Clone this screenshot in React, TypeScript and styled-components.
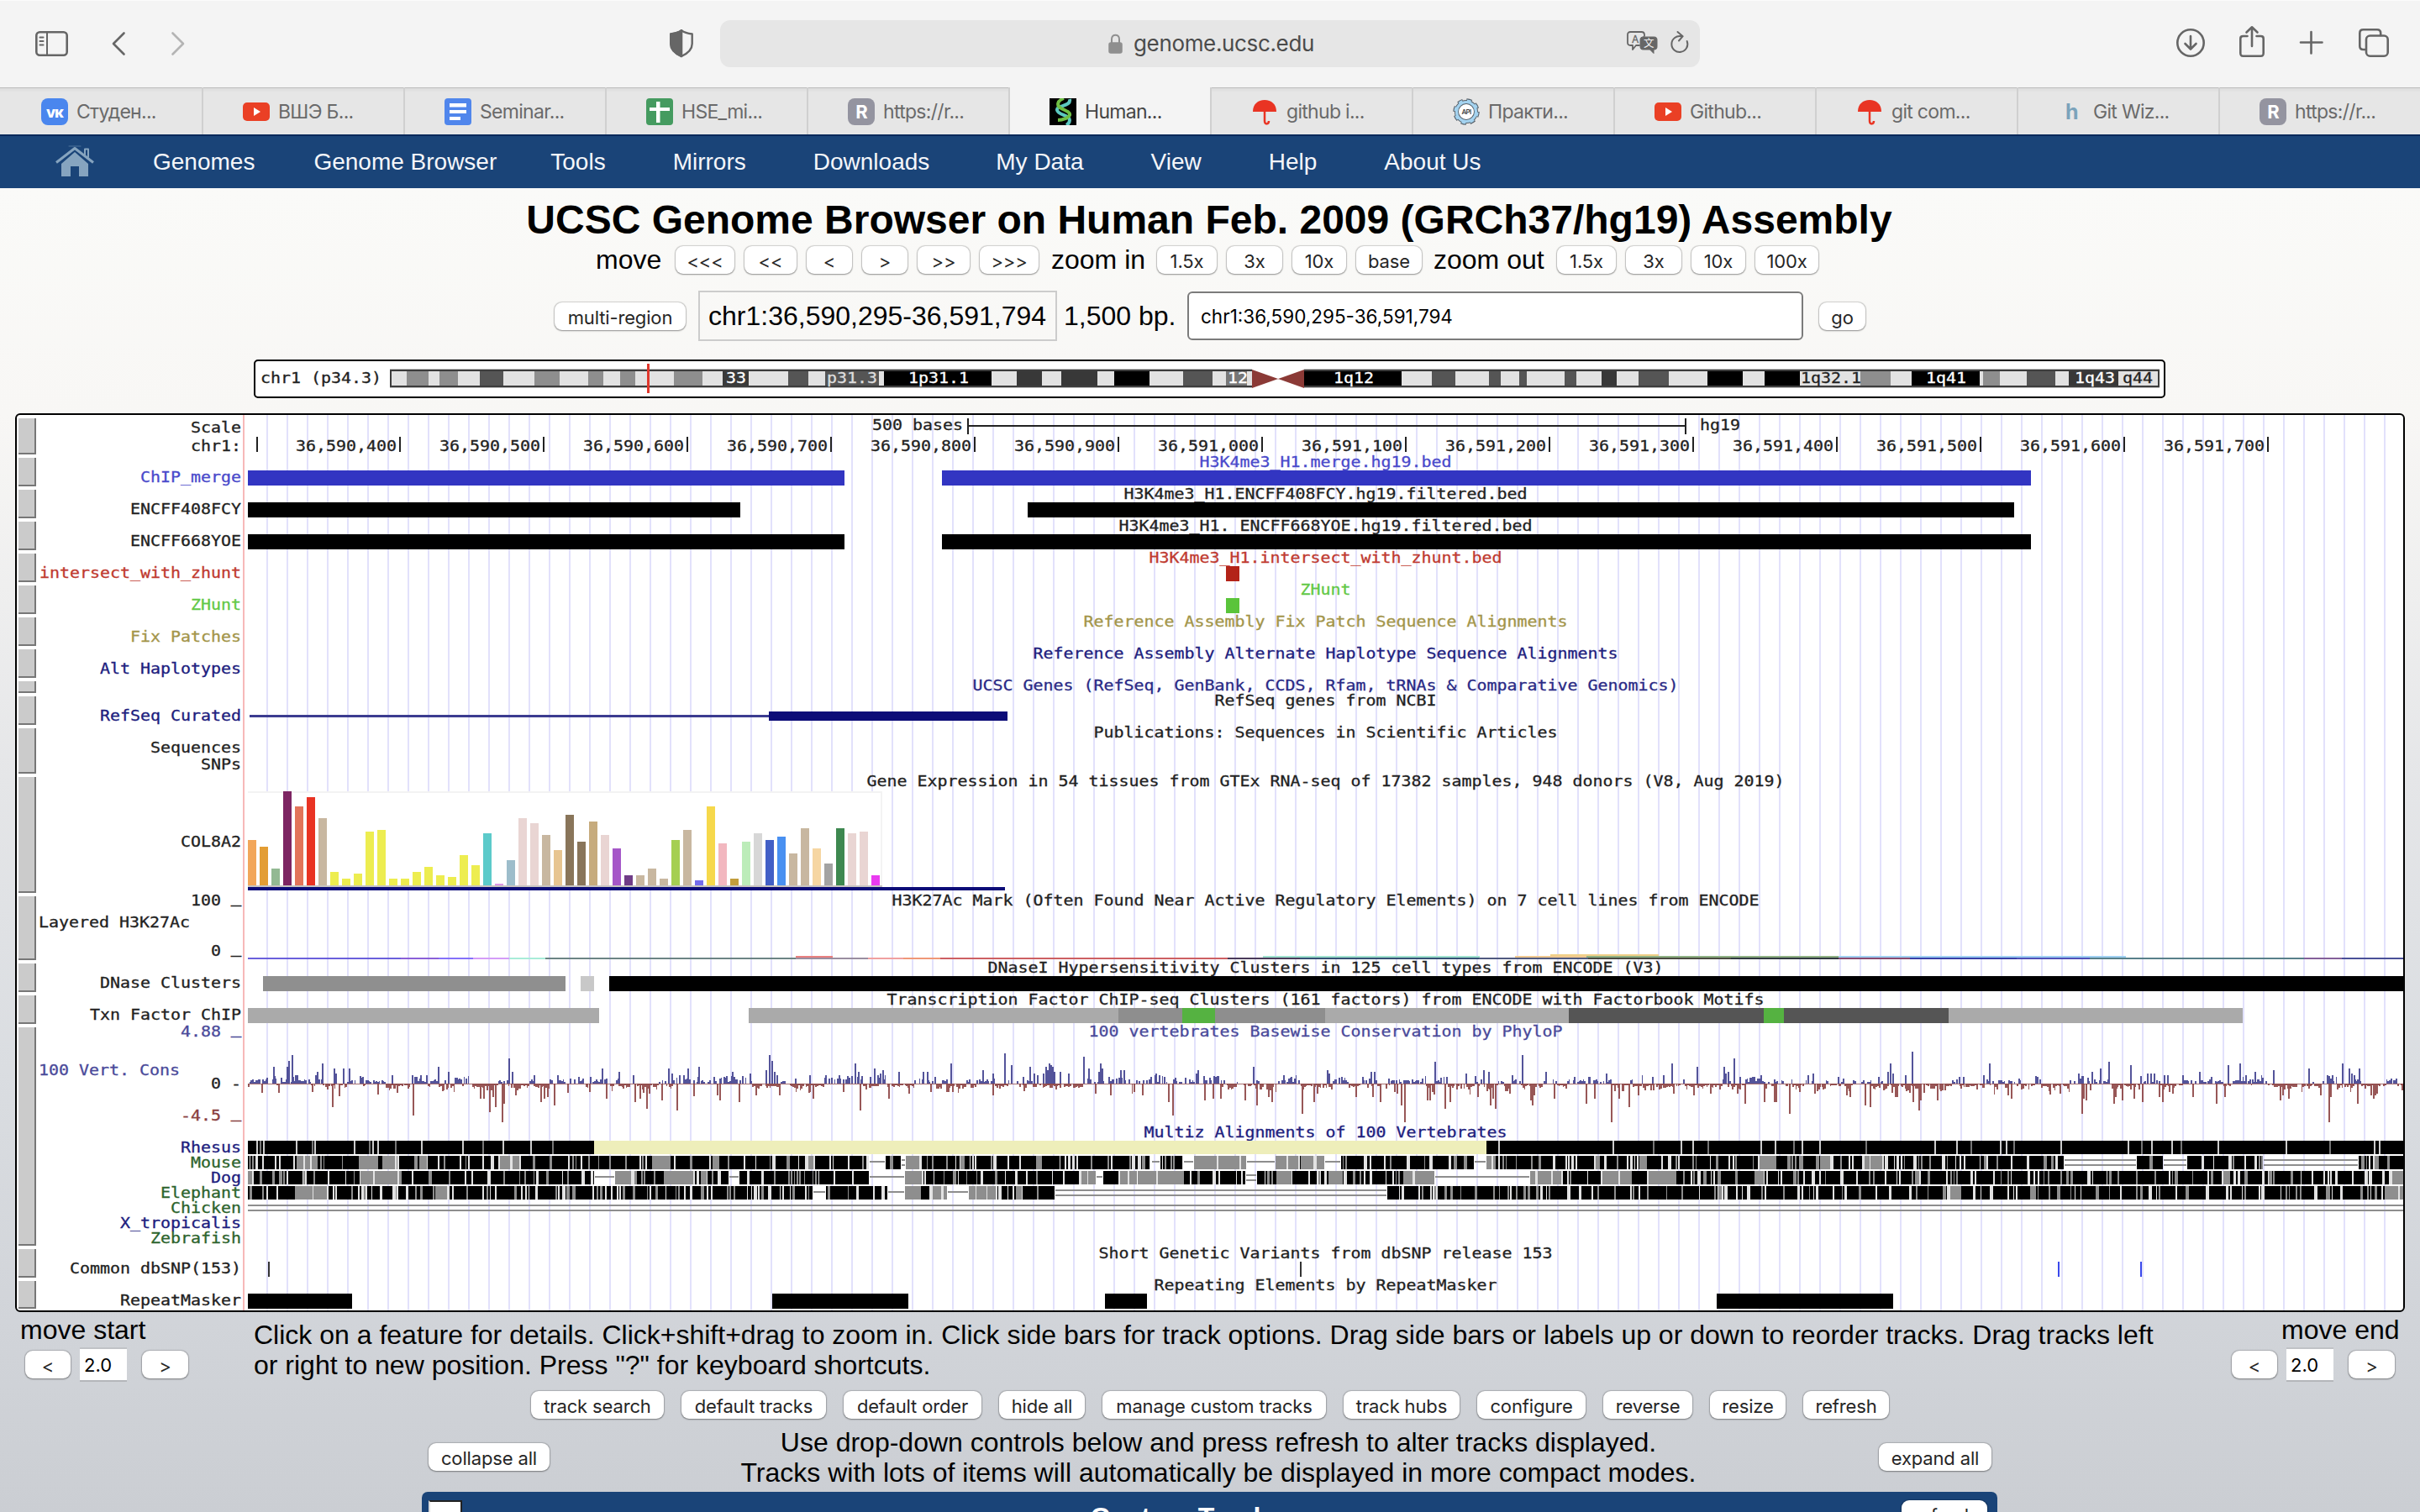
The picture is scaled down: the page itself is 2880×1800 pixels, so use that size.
import React from "react";
import styled, { createGlobalStyle } from "styled-components";

const UI = `Inter, "Noto Sans", sans-serif`;
const ARIAL = `"Liberation Sans", Arial, sans-serif`;
const MONO = `"DejaVu Sans Mono", "Liberation Mono", monospace`;
const NAVY = "#1a4478";

const GlobalStyle = createGlobalStyle`
  html, body { margin: 0; padding: 0; }
  body { width: 2880px; height: 1800px; overflow: hidden; color: #000; font-family: ${ARIAL}; }
  * { box-sizing: border-box; }
`;

const Window = styled.div`
  width: 2880px;
  height: 1800px;
  overflow: hidden;
  display: flex;
  flex-direction: column;
`;

/* ---------- Browser chrome ---------- */

const Toolbar = styled.header`
  height: 104px;
  flex: none;
  display: flex;
  align-items: center;
  padding-left: 42px;
  background: #f4f4f4;
  box-shadow: inset 0 1px #fbfbfb;
`;

const Glyph = styled.svg<{ $w: number; $h: number; $ml?: number; $mt?: number; $color?: string }>`
  width: ${(p) => p.$w}px;
  height: ${(p) => p.$h}px;
  margin-left: ${(p) => p.$ml ?? 0}px;
  margin-top: ${(p) => p.$mt ?? 0}px;
  color: ${(p) => p.$color ?? "#666"};
  fill: none;
  stroke: currentColor;
  stroke-width: 2.6;
  stroke-linecap: round;
  stroke-linejoin: round;
  flex: none;
  overflow: visible;
`;

const AddressField = styled.div`
  width: 1166px;
  height: 56px;
  margin-left: 32px;
  padding-left: 462px;
  border-radius: 12px;
  background: #e6e6e6;
  display: flex;
  align-items: center;
  flex: none;
`;

const Host = styled.span`
  width: 216px;
  margin-left: 13px;
  font: 400 26px/54px ${UI};
  letter-spacing: -0.35px;
  color: #4b4b4b;
  white-space: nowrap;
`;

const TabStrip = styled.div`
  height: 56px;
  flex: none;
  display: grid;
  grid-template-columns: repeat(12, 240px);
  background: #e6e6e6;
`;

const Tab = styled.div<{ $active?: boolean }>`
  display: flex;
  align-items: center;
  gap: 10px;
  padding: 2px 0 0 47px;
  border-left: 2px solid #d0d0d0;
  background: ${(p) =>
    p.$active ? "#f4f4f4" : "linear-gradient(#bdbdbd 0, #bdbdbd 1px, #dcdcdc 1px, #e6e6e6 6px)"};
  color: ${(p) => (p.$active ? "#444" : "#6a6a6a")};
  font: 400 23px/30px ${UI};
  letter-spacing: -0.7px;
  white-space: nowrap;
  &:first-child { border-left-color: transparent; }
`;

const Fav = styled.svg`
  width: 32px;
  height: 32px;
  flex: none;
`;

/* ---------- Site menu ---------- */

const Menu = styled.nav`
  height: 64px;
  flex: none;
  display: flex;
  align-items: center;
  padding-left: 65px;
  background: ${NAVY};
  border-top: 2px solid #08295a;
`;

const MenuItem = styled.a<{ $gap: number }>`
  margin-left: ${(p) => p.$gap}px;
  font: 400 28px/62px ${ARIAL};
  color: #f4f6fa;
  white-space: nowrap;
`;

/* ---------- Page ---------- */

const Page = styled.main`
  flex: 1;
  min-height: 0;
  display: flex;
  flex-direction: column;
  background: linear-gradient(
    #fafaf8 0,
    #f8f7f5 270px,
    #e5e6e8 700px,
    #dadde1 1050px,
    #d1d4d9 1350px,
    #cbced3 1576px
  );
  font-size: 32px;
  line-height: 36px;
`;

const Heading = styled.h1`
  flex: none;
  margin: 10px 0 0;
  padding-right: 2px;
  font: 700 48px/56px ${ARIAL};
  text-align: center;
  white-space: nowrap;
`;

const ControlRow = styled.div<{ $left: number; $h: number; $mt?: number }>`
  display: flex;
  flex: none;
  align-items: center;
  height: ${(p) => p.$h}px;
  margin-top: ${(p) => p.$mt ?? 0}px;
  padding-left: ${(p) => p.$left}px;
`;

const Caption = styled.span<{ $w: number; $pl?: number }>`
  width: ${(p) => p.$w}px;
  padding-left: ${(p) => p.$pl ?? 0}px;
  white-space: nowrap;
`;

const ButtonGroup = styled.div<{ $gap?: number }>`
  display: flex;
  padding-top: 1px;
  gap: ${(p) => p.$gap ?? 12}px;
`;

const PushButton = styled.button<{ $w: number }>`
  width: ${(p) => p.$w}px;
  height: 33px;
  flex: none;
  padding: 3px 0 0;
  border: 0;
  border-radius: 9px;
  background: #fff;
  box-shadow: 0 0 1px 0.5px rgba(0, 0, 0, 0.16), 0 1px 2px rgba(0, 0, 0, 0.3);
  color: #262626;
  font: 400 22px/28px ${UI};
  letter-spacing: -0.15px;
  text-align: center;
  white-space: nowrap;
`;

const PositionBox = styled.div`
  width: 427px;
  height: 60px;
  margin: 0 8px 0 15px;
  padding-left: 10px;
  border: 2px solid #ccc;
  line-height: 56px;
  white-space: nowrap;
`;

const SearchBox = styled.div`
  width: 733px;
  height: 58px;
  margin-right: 19px;
  padding: 2px 0 0 14px;
  border: 2px solid #7b7b7b;
  border-radius: 6px;
  background: #fff;
  font: 400 22.5px/52px ${UI};
  white-space: nowrap;
`;

const IdeogramFrame = styled.div`
  width: 2275px;
  height: 46px;
  flex: none;
  margin: 22px 0 0 302px;
  border: 2px solid #000;
  border-radius: 5px;
  background: #fff;
  svg { display: block; }
`;

/* ---------- Track image ---------- */

const TrackImage = styled.section`
  width: 2844px;
  height: 1070px;
  flex: none;
  margin: 18px 0 0 18px;
  border: 2px solid #000;
  border-radius: 6px;
  background: #fff;
`;

const TrackRow = styled.div<{ $h: number }>`
  display: grid;
  grid-template-columns: 23px 246px 1fr;
  height: ${(p) => p.$h}px;
`;

const Handle = styled.div<{ $top?: boolean }>`
  margin: ${(p) => (p.$top ? 4 : 2)}px 0 2px 2px;
  background: #cbcbcb;
  border-right: 2px solid #777;
  border-bottom: 2px solid #777;
`;

const Labels = styled.div<{ $pad?: number }>`
  padding: ${(p) => p.$pad ?? 18}px 2px 0 0;
`;

const Label = styled.div<{ $color?: string; $left?: boolean; $mt?: number; $lh?: number }>`
  margin-top: ${(p) => p.$mt ?? 0}px;
  margin-left: ${(p) => (p.$left ? 3 : 0)}px;
  font: 400 17px/${(p) => p.$lh ?? 14}px ${MONO};
  -webkit-text-stroke: 0.3px;
  color: ${(p) => p.$color ?? "#222"};
  white-space: pre;
  text-align: ${(p) => (p.$left ? "left" : "right")};
  transform: scaleX(1.1726);
  transform-origin: ${(p) => (p.$left ? "left" : "right")};
`;

const Underscore = styled.span`
  position: relative;
  top: -3px;
  -webkit-text-stroke: 0.8px;
`;

const Plot = styled.div`
  min-width: 0;
  padding-left: 4px;
  border-left: 2px solid #f7b9b9;
  background: repeating-linear-gradient(90deg, transparent 0 22px, #e2e1fb 22px 24px) content-box content-box;
`;

const TrackTitle = styled.div<{ $color?: string; $mt?: number }>`
  width: 2187px;
  height: 17px;
  margin: ${(p) => p.$mt ?? 0}px 0 0 189px;
  font: 400 17px/14px ${MONO};
  -webkit-text-stroke: 0.3px;
  color: ${(p) => p.$color ?? "#222"};
  text-align: center;
  white-space: pre;
  transform: scaleX(1.1726);
`;

const Canvas = styled.svg`
  display: block;
  shape-rendering: crispEdges;
  overflow: visible;
`;

const AxisText = styled.text`
  font: 400 17px ${MONO};
  stroke: currentColor;
  stroke-width: 0.3px;
`;

/* ---------- Footer controls ---------- */

const HelpRow = styled.div`
  display: flex;
  height: 90px;
  flex: none;
`;

const EdgeMover = styled.div<{ $pl: number; $w: number }>`
  width: ${(p) => p.$w}px;
  padding: 3px 0 0 ${(p) => p.$pl}px;
`;

const EdgeControls = styled.div<{ $shift: number }>`
  display: flex;
  align-items: center;
  height: 41px;
  margin: 3px 0 0 ${(p) => p.$shift}px;
`;

const EdgeInput = styled.div`
  width: 56px;
  height: 41px;
  margin: 0 18px 0 11px;
  padding-left: 5px;
  background: #fff;
  border-top: 2px solid #c0c2c6;
  border-bottom: 2px solid #b4b6ba;
  font: 400 22px/38px ${UI};
`;

const HelpText = styled.p`
  width: 2340px;
  margin: 0;
  padding-top: 9px;
  white-space: nowrap;
`;

const CenteredText = styled.p`
  width: 1582px;
  margin: 0;
  padding: 1px 0 0 10px;
  text-align: center;
  white-space: nowrap;
`;

const GroupHeader = styled.div`
  width: 1875px;
  height: 60px;
  flex: none;
  margin: 6px 0 0 502px;
  padding: 10px 12px 0 8px;
  display: flex;
  align-items: flex-start;
  justify-content: space-between;
  border-radius: 7px 7px 0 0;
  background: ${NAVY};
  color: #fff;
  font-weight: 700;
`;

const ToggleBox = styled.span`
  width: 40px;
  height: 40px;
  background: #fff;
  border: 2px solid #222;
  border-left-color: #ddd;
`;

const GroupTitle = styled.span`
  margin: 2px 0 0 12px;
  line-height: 36px;
`;

/* ---------- Data ---------- */

type Segment = [number, number, string];

const PLOT_X = 295;
const PLOT_W = 2565;

function Bars({ items, h = 18 }: { items: Segment[]; h?: number }) {
  return (
    <Canvas width={PLOT_W} height={h}>
      {items.map(([a, b, fill], i) => (
        <rect key={i} x={a - PLOT_X} y={0} width={b - a} height={h} fill={fill} />
      ))}
    </Canvas>
  );
}

const simpleTracks: { label?: string; title: string; color?: string; h?: number; bars?: Segment[] }[] = [
  { label: "ChIP_merge", title: "H3K4me3_H1.merge.hg19.bed", color: "#4a4acb", bars: [[295, 1005, "#3235c2"], [1121, 2417, "#3235c2"]] },
  { label: "ENCFF408FCY", title: "H3K4me3_H1.ENCFF408FCY.hg19.filtered.bed", bars: [[295, 881, "#000"], [1223, 2397, "#000"]] },
  { label: "ENCFF668YOE", title: "H3K4me3_H1. ENCFF668YOE.hg19.filtered.bed", bars: [[295, 1005, "#000"], [1121, 2417, "#000"]] },
  { label: "intersect_with_zhunt", title: "H3K4me3_H1.intersect_with_zhunt.bed", color: "#c03a30", bars: [[1459, 1475, "#b32318"]] },
  { label: "ZHunt", title: "ZHunt", color: "#62c846", bars: [[1459, 1475, "#5ac43b"]] },
  { label: "Fix Patches", title: "Reference Assembly Fix Patch Sequence Alignments", color: "#a3954a" },
  { label: "Alt Haplotypes", title: "Reference Assembly Alternate Haplotype Sequence Alignments", color: "#20207e" },
  { title: "UCSC Genes (RefSeq, GenBank, CCDS, Rfam, tRNAs & Comparative Genomics)", color: "#2a2a86", h: 18 },
];

const dnase: Segment[] = [[313, 673, "#8f8f8f"], [691, 707, "#c8c8c8"], [725, 2860, "#000"]];

const txn: Segment[] = [
  [295, 713, "#aaa"], [891, 1331, "#aaa"], [1331, 1577, "#8e8e8e"], [1407, 1446, "#55b241"],
  [1577, 1867, "#aaa"], [1867, 2319, "#555"], [2099, 2123, "#55b241"], [2319, 2669, "#aaa"],
];

const repeats: Segment[] = [[295, 419, "#000"], [919, 1081, "#000"], [1315, 1365, "#000"], [2043, 2253, "#000"]];

const TAN = "#c8b7a0";
const YEL = "#eded50";
const PNK = "#e9d5d3";
const gtex: [number, string][] = [
  [54, "#f2a65a"], [46, "#e39d34"], [20, "#93b993"], [112, "#7d2562"], [94, "#e2745a"], [105, "#e93323"], [80, TAN],
  [16, YEL], [8, YEL], [14, YEL], [64, YEL], [66, YEL], [8, YEL], [8, YEL], [16, YEL], [22, YEL], [12, YEL], [10, YEL],
  [36, YEL], [24, YEL], [62, "#5ccaca"], [2, "#dd99e5"], [30, "#9dbdcb"], [80, PNK], [74, PNK], [60, TAN], [42, "#e7c591"],
  [84, "#89755a"], [52, "#89755a"], [76, "#c6ab7d"], [60, PNK], [44, "#a557c8"], [12, "#703d87"], [12, TAN], [20, TAN],
  [8, TAN], [54, "#a5cf52"], [66, TAN], [6, "#746cec"], [94, "#f6d84b"], [50, "#f2b7bf"], [8, "#c29d3c"], [52, "#bcecb9"],
  [62, "#d7d7d7"], [54, "#425fc6"], [58, "#4990f1"], [38, TAN], [68, TAN], [44, "#f6d6a2"], [26, "#a3a3a3"],
  [68, "#3e8850"], [62, PNK], [64, PNK], [12, "#e93bf0"],
];

const layered: [number, number, number, string][] = [
  [295, 477, 0, "#6a60dc"], [477, 522, 0, "#8a60d8"], [522, 563, 0, "#8470fa"], [563, 606, 0, "#d49cf8"],
  [606, 649, 0, "#a8ecd8"], [649, 947, 0, "#6c8484"], [947, 1033, 0, "#9a8ea0"], [947, 991, 2, "#e88080"],
  [1033, 1075, 0, "#f0a0a0"], [1075, 1119, 0, "#f09878"], [1119, 1461, 0, "#cd5f63"], [1461, 1547, 0, "#4a3a5a"],
  [1547, 1760, 0, "#355075"], [1503, 1761, 2, "#9fe2cf"], [1760, 1890, 0, "#505a80"], [1803, 1888, 2, "#f0c890"],
  [1845, 1974, 4, "#f0d088"], [1888, 2188, 2, "#8fb184"], [1890, 2060, 0, "#4a4a40"], [2060, 2188, 0, "#303840"],
  [2188, 2530, 2, "#9fd0f2"], [2188, 2273, 0, "#8a4a70"], [2273, 2400, 0, "#3840a8"], [2400, 2487, 0, "#5050b8"],
  [2487, 2742, 0, "#58808a"], [2742, 2787, 0, "#84609a"], [2787, 2860, 0, "#4a5098"],
];

const peaksUp: [number, number][] = [
  [326, 20], [342, 20], [344, 27], [348, 34], [352, 10], [354, 10], [378, 14], [384, 24], [398, 18], [400, 12], [409, 18], [416, 18], [432, 8], [467, 10],
  [508, 10], [522, 20], [534, 14], [555, 6], [606, 30], [610, 14], [636, 10], [664, 10], [717, 18], [737, 14], [754, 10], [796, 18],
  [800, 12], [819, 18], [832, 20], [872, 14], [893, 12], [912, 16], [916, 34], [919, 27], [922, 14], [925, 10], [947, 6], [964, 10],
  [1018, 24], [1022, 14], [1036, 8], [1041, 18], [1045, 10], [1048, 12], [1051, 16], [1070, 14], [1099, 14], [1104, 14], [1132, 24], [1170, 16], [1182, 12],
  [1196, 36], [1204, 22], [1218, 8], [1226, 20], [1231, 12], [1242, 12], [1245, 20], [1247, 16], [1249, 24], [1251, 22], [1253, 20], [1255, 14], [1262, 14], [1272, 12],
  [1290, 32], [1296, 18], [1308, 14], [1310, 24], [1312, 18], [1334, 16], [1338, 16], [1376, 12], [1386, 8], [1424, 12], [1426, 16], [1492, 20], [1528, 10],
  [1537, 8], [1580, 16], [1582, 12], [1622, 8], [1632, 14], [1636, 14], [1653, 6], [1708, 26], [1722, 8], [1745, 12], [1766, 16], [1772, 14],
  [1800, 10], [1812, 34], [1840, 14], [1874, 8], [1892, 8], [1912, 12], [1967, 8], [1980, 10], [1990, 24], [2020, 20],
  [2052, 20], [2054, 12], [2057, 14], [2064, 30], [2071, 8], [2096, 10], [2152, 10], [2158, 12], [2188, 8], [2236, 8], [2247, 14], [2250, 24], [2253, 12],
  [2268, 10], [2276, 38], [2332, 8], [2337, 8], [2361, 10], [2368, 24], [2403, 6], [2474, 12], [2490, 14], [2500, 18], [2510, 26],
  [2536, 22], [2556, 12], [2560, 12], [2564, 12], [2576, 10], [2580, 10], [2598, 10], [2618, 14], [2652, 22], [2666, 24], [2684, 14],
  [2706, 16], [2748, 18], [2776, 10], [2788, 24], [2796, 18], [2799, 12], [2802, 10], [2808, 18], [2846, 6], [2852, 6],
];

const peaksDown: [number, number][] = [
  [312, 11], [332, 11], [372, 10], [396, 28], [404, 15], [450, 13], [473, 11], [492, 38], [572, 18], [576, 18], [583, 34], [587, 16],
  [590, 28], [598, 46], [600, 24], [614, 14], [644, 22], [648, 18], [652, 16], [660, 26], [676, 11], [702, 10], [722, 18], [756, 22], [762, 18], [770, 30],
  [773, 12], [788, 20], [806, 32], [826, 15], [854, 14], [857, 20], [880, 22], [900, 14], [928, 14], [968, 18], [1004, 10], [1024, 32],
  [1058, 18], [1082, 12], [1108, 10], [1127, 10], [1134, 10], [1182, 14], [1304, 12], [1322, 14], [1350, 10], [1360, 14],
  [1391, 22], [1396, 38], [1434, 20], [1444, 18], [1453, 18], [1482, 20], [1496, 26], [1510, 16], [1514, 22], [1550, 36],
  [1564, 22], [1614, 16], [1634, 16], [1643, 22], [1660, 10], [1663, 12], [1668, 26], [1672, 46], [1699, 20], [1702, 20], [1720, 30], [1726, 22], [1759, 16],
  [1774, 26], [1777, 18], [1780, 30], [1797, 12], [1822, 20], [1824, 26], [1826, 14], [1850, 18], [1888, 24], [1898, 18], [1918, 46], [1927, 18], [1939, 28],
  [1950, 14], [1992, 12], [2016, 14], [2036, 12], [2068, 12], [2077, 24], [2100, 22], [2112, 22], [2114, 22], [2130, 36], [2142, 10], [2160, 12],
  [2198, 14], [2202, 16], [2220, 26], [2226, 28], [2256, 16], [2258, 16], [2277, 22], [2284, 32], [2286, 20], [2306, 20], [2312, 8], [2315, 8],
  [2390, 14], [2394, 18], [2452, 12], [2478, 36], [2480, 18], [2483, 20], [2516, 24], [2518, 16], [2526, 20], [2540, 18], [2550, 22], [2570, 16],
  [2574, 22], [2586, 12], [2610, 16], [2638, 24], [2648, 16], [2714, 20], [2717, 14], [2724, 18], [2762, 14], [2772, 46], [2774, 16], [2806, 24],
  [2822, 14], [2825, 18], [2827, 14], [2829, 12],
];

/** Deterministic generator for per-base values between the named peaks. */
function seeded(seed: number) {
  let s = seed;
  return () => {
    s = (s * 1664525 + 1013904223) % 4294967296;
    return s / 4294967296;
  };
}

function wigglePaths() {
  const rnd = seeded(19);
  const step = PLOT_W / 1500;
  let up = "";
  let down = "";
  let mood = 0;
  const bar = (x: number, y: number, h: number) => `M${x.toFixed(1)} ${y}v${h}h1.7v${-h}z`;
  for (let i = 0; i < 1500; i++) {
    const x = i * step;
    if (rnd() < 0.22) mood = rnd() - 0.55;
    const r = rnd();
    if (mood > 0) {
      if (r < 0.66) up += bar(x, 69, -Math.round(2 + rnd() * (mood > 0.3 ? 8 : 3)));
    } else if (r < 0.85) {
      down += bar(x, 69, Math.round(2 + rnd() * rnd() * (mood < -0.25 ? 13 : 6)));
    }
  }
  peaksUp.forEach(([x, h]) => { up += bar(x - PLOT_X - 1, 69, -h); });
  peaksDown.forEach(([x, h]) => { down += bar(x - PLOT_X - 1, 69, h); });
  return { up, down };
}

type Species = { gaps: [number, number, 1 | 2][]; gray: [number, number][]; seed: number };

const species: Species[] = [
  {
    seed: 7,
    gaps: [
      [1034, 1054, 1], [1072, 1078, 2], [1370, 1381, 1], [1408, 1421, 1], [1483, 1518, 1], [1576, 1596, 1], [1754, 1769, 1],
      [2456, 2543, 2], [2574, 2603, 2], [2693, 2807, 2],
    ],
    gray: [[353, 376], [427, 447], [455, 473], [501, 508], [593, 620], [776, 795], [1078, 1094], [1421, 1483], [1518, 1545], [1556, 1576], [1769, 1778], [2092, 2112], [2216, 2240]],
  },
  {
    seed: 23,
    gaps: [[707, 732, 1], [867, 880, 1], [1034, 1077, 1], [1304, 1313, 1], [1482, 1496, 2], [1707, 1821, 1]],
    gray: [[295, 300], [436, 473], [732, 756], [790, 827], [1077, 1099], [1284, 1303], [1331, 1408], [1519, 1539], [1583, 1596], [1670, 1707], [1821, 1858], [1905, 1941], [1960, 1988], [2846, 2858]],
  },
  {
    seed: 41,
    gaps: [[967, 983, 1], [1056, 1077, 1], [1127, 1153, 1], [1255, 1651, 2]],
    gray: [[353, 389], [520, 533], [1077, 1096], [1108, 1127], [1153, 1185], [2320, 2331], [2838, 2858]],
  },
];

function alignmentPaths({ gaps, gray, seed }: Species, top: number) {
  const rnd = seeded(seed);
  let black = "";
  let mid = "";
  let light = "";
  let lines = "";
  const cell = (x: number, w: number) => `M${(x - PLOT_X).toFixed(1)} ${top}h${w.toFixed(1)}v16h${(-w).toFixed(1)}z`;
  let x = PLOT_X;
  while (x < 2860) {
    const gap = gaps.find(([a, b]) => x >= a - 1 && x < b - 1);
    if (gap) {
      const a = gap[0] - PLOT_X + 1;
      const w = gap[1] - gap[0] - 2;
      lines += gap[2] === 1 ? `M${a} ${top + 6}h${w}v2h${-w}z` : `M${a} ${top + 4}h${w}v2h${-w}zM${a} ${top + 10}h${w}v2h${-w}z`;
      x = gap[1];
      continue;
    }
    const grayZone = gray.find(([a, b]) => x >= a - 1 && x < b - 1);
    const stops = gaps.map((g) => g[0]).filter((g) => g > x);
    const nextGap = stops.length ? stops[0] : 2860;
    const grayStops = gray.map((g) => g[0]).filter((g) => g > x + 1);
    const limit = Math.min(nextGap, grayZone ? grayZone[1] : grayStops.length ? grayStops[0] : 2860);
    const w = grayZone ? 5 + rnd() * 16 : 1.7 * (1 + Math.floor(Math.pow(rnd(), 2) * 12));
    const width = Math.max(1, Math.min(w, limit - x));
    if (grayZone) mid += cell(x, width);
    else if (rnd() < 0.08 && width < 8) mid += cell(x, width);
    else black += cell(x, width);
    x += width;
    const sep = Math.min(1.7 * (1 + Math.floor(rnd() * 1.4)), Math.max(0, nextGap - x));
    if (sep > 0) {
      if (rnd() < 0.45) mid += cell(x, sep);
      else light += cell(x, sep);
      x += sep;
    }
    if (x >= nextGap - 1) x = nextGap;
  }
  return { black, mid, light, lines };
}

const rhesusCuts = [
  305, 309, 313, 352, 371, 374, 421, 439, 443, 449, 470, 501, 550, 574, 598, 631, 657, 1783, 1919, 1967, 2000, 2014, 2032,
  2095, 2112, 2134, 2144, 2165, 2220, 2302, 2328, 2345, 2380, 2387, 2396, 2452, 2532, 2548, 2560, 2584, 2595, 2639, 2720, 2772, 2825, 2831,
];

function Conservation() {
  const w = wigglePaths();
  return (
    <Canvas width={PLOT_W} height={264}>
      <rect x={0} y={69} width={PLOT_W} height={1.4} fill="#a87070" />
      <path d={w.up} fill="#3c3c8c" opacity={0.88} />
      <path d={w.down} fill="#8a4040" opacity={0.88} />
      <rect x={0} y={137} width={412} height={16} fill="#000" />
      <rect x={412} y={137} width={1062} height={16} fill="#eeeeba" />
      <rect x={1474} y={137} width={1091} height={16} fill="#000" />
      {rhesusCuts.map((x, i) => (
        <rect key={x} x={x - PLOT_X} y={137} width={2} height={16} fill={i % 3 === 1 ? "#777" : "#ccc"} />
      ))}
      {species.map((s, i) => {
        const p = alignmentPaths(s, 155 + i * 18);
        return (
          <g key={s.seed}>
            <path d={p.light} fill="#e2e2e2" />
            <path d={p.mid} fill="#8e8e8e" />
            <path d={p.black} fill="#000" />
            <path d={p.lines} fill="#8e8e8e" />
          </g>
        );
      })}
      <rect x={0} y={213} width={PLOT_W} height={2} fill="#8e8e8e" />
      <rect x={0} y={219} width={PLOT_W} height={2} fill="#8e8e8e" />
    </Canvas>
  );
}

const coords = [400, 500, 600, 700, 800, 900, 1000, 1100, 1200, 1300, 1400, 1500, 1600, 1700];

function Ruler() {
  return (
    <Canvas width={PLOT_W} height={49} color="#222" fill="#222">
      <AxisText x={743} y={18} textLength={108} lengthAdjust="spacingAndGlyphs">500 bases</AxisText>
      <rect x={856} y={4} width={2} height={19} />
      <rect x={858} y={12} width={853} height={2} />
      <rect x={1710} y={4} width={2} height={19} />
      <AxisText x={1728} y={18} textLength={48} lengthAdjust="spacingAndGlyphs">hg19</AxisText>
      <rect x={10} y={26} width={2} height={18} />
      {coords.map((c, i) => {
        const x = 181 + i * 171;
        const text = `36,59${c >= 1000 ? 1 : 0},${String(c % 1000).padStart(3, "0")}`;
        return (
          <g key={c}>
            <AxisText x={x - 124} y={42.5} textLength={120} lengthAdjust="spacingAndGlyphs">{text}</AxisText>
            <rect x={x - 1} y={26} width={2} height={18} />
          </g>
        );
      })}
    </Canvas>
  );
}

const bands: Segment[] = [
  [484, 510, "#8e8e8e"], [523, 545, "#8e8e8e"], [571, 599, "#555"],
  [636, 666, "#8e8e8e"], [700, 718, "#8e8e8e"], [738, 756, "#8e8e8e"], [802, 836, "#8e8e8e"],
  [860, 891, "#3a3a3a"], [938, 962, "#555"], [982, 1046, "#555"], [1052, 1180, "#000"], [1210, 1240, "#383838"],
  [1263, 1306, "#383838"], [1326, 1368, "#000"], [1408, 1443, "#555"], [1459, 1484, "#777"], [1552, 1668, "#000"],
  [1704, 1732, "#555"], [1772, 1786, "#555"], [1808, 1817, "#555"], [1862, 1876, "#555"], [1906, 1924, "#383838"],
  [1950, 1986, "#555"], [2032, 2074, "#000"], [2100, 2142, "#000"], [2214, 2250, "#8e8e8e"], [2275, 2356, "#000"],
  [2360, 2380, "#8e8e8e"], [2412, 2446, "#555"], [2462, 2521, "#383838"],
];

const bandNames: [number, string, string][] = [
  [864, "33", "#fff"], [984, "p31.3", "#ddd"], [1081, "1p31.1", "#fff"], [1461, "12", "#fff"], [1587, "1q12", "#fff"],
  [2143, "1q32.1", "#222"], [2292, "1q41", "#fff"], [2469, "1q43", "#fff"], [2526, "q44", "#222"],
];

function Ideogram() {
  const ox = 304;
  return (
    <IdeogramFrame>
      <Canvas width={2271} height={42}>
        <AxisText x={6} y={25.5} fill="#222" color="#222" textLength={144} lengthAdjust="spacingAndGlyphs">chr1 (p34.3)</AxisText>
        <rect x={464 - ox} y={9} width={1026} height={23} fill="#bbb" />
        <rect x={1552 - ox} y={9} width={1018} height={23} fill="#bbb" />
        <rect x={464 - ox} y={10} width={1026} height={21} fill="#3c3c3c" />
        <rect x={1552 - ox} y={10} width={1018} height={21} fill="#3c3c3c" />
        <rect x={466 - ox} y={12} width={1024} height={17} fill="#e2e2e2" />
        <rect x={1552 - ox} y={12} width={1016} height={17} fill="#e2e2e2" />
        {bands.map(([a, b, f]) => (
          <rect key={a} x={a - ox} y={12} width={b - a} height={17} fill={f} />
        ))}
        <path d={`M${1490 - ox} 10L${1552 - ox} 32V10L${1490 - ox} 32z`} fill="#8b3a36" shapeRendering="auto" />
        {bandNames.map(([x, t, c]) => (
          <AxisText key={t} x={x - ox} y={26} fill={c} color={c} textLength={t.length * 12} lengthAdjust="spacingAndGlyphs">{t}</AxisText>
        ))}
        <rect x={770 - ox} y={3} width={3} height={35} fill="#e0372c" />
      </Canvas>
    </IdeogramFrame>
  );
}

/* ---------- Favicons ---------- */

const VkIcon = () => (
  <Fav viewBox="0 0 32 32">
    <rect width="32" height="32" rx="8" fill="#4a86ee" />
    <text x="16" y="22.5" textAnchor="middle" fontFamily="Inter, sans-serif" fontWeight="800" fontSize="18" letterSpacing="-1" fill="#fff">vк</text>
  </Fav>
);
const YoutubeIcon = () => (
  <Fav viewBox="0 0 32 32">
    <rect y="5" width="32" height="22" rx="5" fill="#ea4025" />
    <path d="M13 11l8 5-8 5z" fill="#fff" />
  </Fav>
);
const DocsIcon = () => (
  <Fav viewBox="0 0 32 32">
    <rect width="32" height="32" rx="4" fill="#5086ec" />
    <path d="M6 6h20v4.500H6zM6 14h20v4H6zM6 22h13v4H6z" fill="#fff" />
  </Fav>
);
const SheetsIcon = () => (
  <Fav viewBox="0 0 32 32">
    <rect width="32" height="32" rx="4" fill="#459b60" />
    <path d="M4 11h24v4H4zM12 4h4.500v25H12z" fill="#fff" />
  </Fav>
);
const RIcon = () => (
  <Fav viewBox="0 0 32 32">
    <rect width="32" height="32" rx="8" fill="#9494a0" />
    <text x="16" y="24" textAnchor="middle" fontFamily="Inter, sans-serif" fontWeight="700" fontSize="22" fill="#fff">R</text>
  </Fav>
);
const HelixIcon = () => (
  <Fav viewBox="0 0 32 32">
    <rect width="32" height="32" fill="#000" />
    <path d="M24 1C26 10 8 8 9 14s15 6 15 12c0 3-2 5-4 6" fill="none" stroke="#5cc8c0" strokeWidth="4" />
    <path d="M17 0c-8 3-9 9-3 12s11 5 10 8-8 6-14 6" fill="none" stroke="#6fbf44" strokeWidth="4" />
  </Fav>
);
const UmbrellaIcon = () => (
  <Fav viewBox="0 0 32 32">
    <path d="M2 16C2 7 8 2 16 2s14 5 14 14z" fill="#e93423" />
    <path d="M16 15v12c0 5 5 4 5 0" fill="none" stroke="#e93423" strokeWidth="2.500" />
  </Fav>
);
const ApiIcon = () => (
  <Fav viewBox="0 0 32 32">
    <circle cx="16" cy="16" r="13" fill="none" stroke="#555f68" strokeWidth="5.500" strokeDasharray="5.800 4.410" />
    <circle cx="16" cy="16" r="11.500" fill="#fff" stroke="#555f68" strokeWidth="5" />
    <circle cx="16" cy="16" r="13" fill="none" stroke="#a4d3f0" strokeWidth="3.200" strokeDasharray="4.600 5.610" strokeDashoffset="-0.600" />
    <circle cx="16" cy="16" r="11.500" fill="none" stroke="#a4d3f0" strokeWidth="3.200" />
    <text x="16" y="19" textAnchor="middle" fontFamily="Inter, sans-serif" fontWeight="600" fontSize="8" fill="#444">API</text>
  </Fav>
);
const HIcon = () => (
  <Fav viewBox="0 0 32 32">
    <text x="9" y="25" fontFamily="Inter, sans-serif" fontWeight="700" fontSize="25" fill="#7ba3bb">h</text>
  </Fav>
);

const tabs: { icon: React.ReactNode; text: string; active?: boolean }[] = [
  { icon: <VkIcon />, text: "Студен..." },
  { icon: <YoutubeIcon />, text: "ВШЭ Б..." },
  { icon: <DocsIcon />, text: "Seminar..." },
  { icon: <SheetsIcon />, text: "HSE_mi..." },
  { icon: <RIcon />, text: "https://r..." },
  { icon: <HelixIcon />, text: "Human...", active: true },
  { icon: <UmbrellaIcon />, text: "github i..." },
  { icon: <ApiIcon />, text: "Практи..." },
  { icon: <YoutubeIcon />, text: "Github..." },
  { icon: <UmbrellaIcon />, text: "git com..." },
  { icon: <HIcon />, text: "Git Wiz..." },
  { icon: <RIcon />, text: "https://r..." },
];

const menu: [string, number][] = [
  ["Genomes", 69], ["Genome Browser", 70], ["Tools", 64], ["Mirrors", 80], ["Downloads", 80],
  ["My Data", 79], ["View", 80], ["Help", 80], ["About Us", 80],
];

function Chrome() {
  return (
    <>
      <Toolbar>
        <Glyph $w={39} $h={30} $mt={-1} viewBox="0 0 39 30">
          <rect x="1.300" y="1.300" width="36.400" height="27.400" rx="4" />
          <path d="M14 1.500v27M5.500 7.500h4M5.500 12h4M5.500 16.500h4" strokeWidth="2" />
        </Glyph>
        <Glyph $w={16} $h={28} $ml={52} $mt={-1} viewBox="0 0 16 28"><path d="M14.500 1.500L2 14l12.500 12.500" /></Glyph>
        <Glyph $w={16} $h={28} $ml={55} $mt={-1} $color="#b4b4b4" viewBox="0 0 16 28"><path d="M1.500 1.500L14 14 1.500 26.500" /></Glyph>
        <Glyph $w={28} $h={33} $ml={577} $mt={-1} viewBox="0 0 28 33">
          <path d="M14 1.300C10.500 4 6 5 1.300 5.500V17c0 7 5 11.500 12.700 15 7.700-3.500 12.700-8 12.700-15V5.500C22 5 17.500 4 14 1.300z" strokeWidth="2.400" />
          <path d="M14 1.300C10.500 4 6 5 1.300 5.500V17c0 7 5 11.500 12.700 15z" fill="currentColor" />
        </Glyph>
        <AddressField>
          <Glyph $w={17} $h={24} $color="#8f8f8f" viewBox="0 0 17 24">
            <path d="M4 11V6.500C4 0 13 0 13 6.500V11" strokeWidth="2" />
            <rect x="1" y="11" width="15" height="12" rx="2" fill="currentColor" strokeWidth="1.500" />
          </Glyph>
          <Host>genome.ucsc.edu</Host>
          <Glyph $w={37} $h={27} $ml={371} $mt={-4} viewBox="0 0 37 27">
            <path d="M15 17h-4l-4 5v-5H4.500C2 17 1 16 1 13.500v-9C1 2 2 1 4.500 1h13C20 1 21 2 21 4.500V6" strokeWidth="1.800" />
            <text x="6" y="13.500" fontSize="12" fontFamily="Inter, sans-serif" fill="currentColor" strokeWidth="0.300">A</text>
            <path d="M19.500 7h13c2.500 0 3.500 1 3.500 3.500v8c0 2.500-1 3.500-3.500 3.500H32v4.500L27.500 22h-8c-2.500 0-3.500-1-3.500-3.500v-8C16 8 17 7 19.500 7z" fill="currentColor" strokeWidth="1" />
            <text x="20" y="19" fontSize="12.500" fontFamily="'Noto Sans CJK SC', sans-serif" fill="#f0f0f0" stroke="none">文</text>
          </Glyph>
          <Glyph $w={22} $h={26} $ml={15} $mt={-4} viewBox="0 0 22 26">
            <path d="M19.700 12A9.500 9.500 0 1 1 13 6.200M8.500 1l6.200 5.200L10 11.500" strokeWidth="2" />
          </Glyph>
        </AddressField>
        <Glyph $w={34} $h={34} $ml={567} $mt={-2} viewBox="0 0 34 34">
          <circle cx="17" cy="17" r="15.700" />
          <path d="M17 9v15M10.500 18l6.500 6.500 6.500-6.500" />
        </Glyph>
        <Glyph $w={30} $h={37} $ml={41} $mt={-5} viewBox="0 0 30 37">
          <path d="M9.500 12H4.500C2 12 1.300 13 1.300 15v17c0 3 .7 3.700 3.200 3.700h21c2.500 0 3.200-.7 3.200-3.700V15c0-2-.7-3-3.200-3h-5M15 24V1.500M8.500 7.500L15 1.300l6.500 6.200" />
        </Glyph>
        <Glyph $w={27} $h={27} $ml={42} $mt={-3} viewBox="0 0 27 27"><path d="M13.500 1v25.500M1 13.500h25.500" /></Glyph>
        <Glyph $w={36} $h={34} $ml={43} $mt={-2} viewBox="0 0 36 34">
          <path d="M8 25H5.500C2.500 25 1.300 23.800 1.300 21V5.500C1.300 2.500 2.500 1.300 5.500 1.300H22c3 0 4.200 1.200 4.200 4.200V8" />
          <rect x="9" y="8.500" width="25.700" height="24.200" rx="4.500" />
        </Glyph>
      </Toolbar>
      <TabStrip>
        {tabs.map((t, i) => (
          <Tab key={i} $active={t.active}>
            {t.icon}
            {t.text}
          </Tab>
        ))}
      </TabStrip>
      <Menu>
        <Glyph $w={48} $h={37} $mt={-4} $color="#86a4bf" viewBox="0 0 48 37">
          <path d="M24 8L8 22v15h11V25h10v12h11V22z" fill="currentColor" stroke="none" />
          <path d="M2 20.500L24 3.500l22 17" strokeWidth="3" strokeLinecap="butt" />
          <path d="M36 11V4.500h4V14" strokeWidth="2" />
          <path d="M17 1h14" strokeWidth="1" opacity="0.5" />
        </Glyph>
        {menu.map(([name, gap]) => (
          <MenuItem key={name} $gap={gap}>{name}</MenuItem>
        ))}
      </Menu>
    </>
  );
}

function Buttons({ items, gap }: { items: [string, number][]; gap?: number }) {
  return (
    <ButtonGroup $gap={gap}>
      {items.map(([t, w], i) => <PushButton key={i} $w={w}>{t}</PushButton>)}
    </ButtonGroup>
  );
}

function Tracks() {
  return (
    <TrackImage>
      <TrackRow $h={49}>
        <Handle $top />
        <Labels $pad={8}>
          <Label>Scale</Label>
          <Label $mt={8}>chr1:</Label>
        </Labels>
        <Plot><Ruler /></Plot>
      </TrackRow>
      {simpleTracks.map((t) => (
        <TrackRow key={t.title} $h={t.h ?? 38}>
          <Handle />
          <Labels>{t.label && <Label $color={t.color}>{t.label}</Label>}</Labels>
          <Plot>
            <TrackTitle $color={t.color}>{t.title}</TrackTitle>
            {t.bars && <Bars items={t.bars} />}
          </Plot>
        </TrackRow>
      ))}
      <TrackRow $h={38}>
        <Handle />
        <Labels><Label $color="#20207e">RefSeq Curated</Label></Labels>
        <Plot>
          <TrackTitle>RefSeq genes from NCBI</TrackTitle>
          <Canvas width={PLOT_W} height={18}>
            <rect x={2} y={7} width={620} height={3} fill="#3c3c90" />
            <rect x={620} y={3} width={284} height={11} fill="#0c0c78" />
          </Canvas>
        </Plot>
      </TrackRow>
      <TrackRow $h={58}>
        <Handle />
        <Labels>
          <Label>Sequences</Label>
          <Label $mt={6}>SNPs</Label>
        </Labels>
        <Plot><TrackTitle>Publications: Sequences in Scientific Articles</TrackTitle></Plot>
      </TrackRow>
      <TrackRow $h={142}>
        <Handle />
        <Labels $pad={72}><Label>COL8A2</Label></Labels>
        <Plot>
          <TrackTitle>Gene Expression in 54 tissues from GTEx RNA-seq of 17382 samples, 948 donors (V8, Aug 2019)</TrackTitle>
          <Canvas width={PLOT_W} height={122}>
            <rect x={0} y={2} width={755} height={114} fill="#f3f3f3" />
            <rect x={0} y={4} width={753} height={110} fill="#fff" />
            <rect x={0} y={114} width={755} height={2} fill="#c8c4c0" />
            {gtex.map(([h, c], i) => (
              <rect key={i} x={i * 14} y={114 - h} width={10} height={h} fill={c} />
            ))}
            <rect x={0} y={116} width={901} height={4} fill="#0c0c78" />
          </Canvas>
        </Plot>
      </TrackRow>
      <TrackRow $h={80}>
        <Handle />
        <Labels $pad={0}>
          <Label>100 <Underscore>_</Underscore></Label>
          <Label $left $mt={12}>Layered H3K27Ac</Label>
          <Label $mt={20}>0 <Underscore>_</Underscore></Label>
        </Labels>
        <Plot>
          <TrackTitle>H3K27Ac Mark (Often Found Near Active Regulatory Elements) on 7 cell lines from ENCODE</TrackTitle>
          <Canvas width={PLOT_W} height={63}>
            {layered.map(([a, b, up, c], i) => (
              <rect key={i} x={a - PLOT_X} y={58 - up} width={b - a} height={2} fill={c} />
            ))}
          </Canvas>
        </Plot>
      </TrackRow>
      <TrackRow $h={38}>
        <Handle />
        <Labels><Label>DNase Clusters</Label></Labels>
        <Plot>
          <TrackTitle>DNaseI Hypersensitivity Clusters in 125 cell types from ENCODE (V3)</TrackTitle>
          <Bars items={dnase} />
        </Plot>
      </TrackRow>
      <TrackRow $h={38}>
        <Handle />
        <Labels><Label>Txn Factor ChIP</Label></Labels>
        <Plot>
          <TrackTitle>Transcription Factor ChIP-seq Clusters (161 factors) from ENCODE with Factorbook Motifs</TrackTitle>
          <Bars items={txn} />
        </Plot>
      </TrackRow>
      <TrackRow $h={264}>
        <Handle />
        <Labels $pad={0}>
          <Label $color="#4a4a9a">4.88 <Underscore>_</Underscore></Label>
          <Label $color="#4a4a9a" $left $mt={32}>100 Vert. Cons</Label>
          <Label $mt={2}>0 -</Label>
          <Label $color="#8a4040" $mt={24}>-4.5 <Underscore>_</Underscore></Label>
          <Label $color="#20207e" $lh={18} $mt={22}>Rhesus</Label>
          <Label $color="#2d642d" $lh={18}>Mouse</Label>
          <Label $color="#20207e" $lh={18}>Dog</Label>
          <Label $color="#2d642d" $lh={18}>Elephant</Label>
          <Label $color="#2d642d" $lh={18}>Chicken</Label>
          <Label $color="#20207e" $lh={18}>X_tropicalis</Label>
          <Label $color="#2d642d" $lh={18}>Zebrafish</Label>
        </Labels>
        <Plot>
          <ConservationStack>
            <TrackTitle $color="#4a4a9a">100 vertebrates Basewise Conservation by PhyloP</TrackTitle>
            <TrackTitle $color="#20207e" $mt={103}>Multiz Alignments of 100 Vertebrates</TrackTitle>
            <Conservation />
          </ConservationStack>
        </Plot>
      </TrackRow>
      <TrackRow $h={38}>
        <Handle />
        <Labels><Label>Common dbSNP(153)</Label></Labels>
        <Plot>
          <TrackTitle>Short Genetic Variants from dbSNP release 153</TrackTitle>
          <Bars items={[[319, 321, "#333"], [1547, 1549, "#333"], [2449, 2451, "#3a49ec"], [2547, 2549, "#3a49ec"]]} />
        </Plot>
      </TrackRow>
      <TrackRow $h={37}>
        <Handle />
        <Labels><Label>RepeatMasker</Label></Labels>
        <Plot>
          <TrackTitle>Repeating Elements by RepeatMasker</TrackTitle>
          <Bars items={repeats} />
        </Plot>
      </TrackRow>
    </TrackImage>
  );
}

/* The wiggle and alignment drawing shares its area with the two track titles. */
const ConservationStack = styled.div`
  position: relative;
  height: 264px;
  ${Canvas} {
    position: absolute;
    inset: 0 auto auto 0;
  }
`;

export default function App() {
  return (
    <Window>
      <GlobalStyle />
      <Chrome />
      <Page>
        <Heading>UCSC Genome Browser on Human Feb. 2009 (GRCh37/hg19) Assembly</Heading>
        <ControlRow $left={709} $h={38}>
          <Caption $w={95}>move</Caption>
          <Buttons items={[["<<<", 70], ["<<", 62], ["<", 54], [">", 54], [">>", 62], [">>>", 70]]} />
          <Caption $w={141} $pl={15}>zoom in</Caption>
          <Buttons items={[["1.5x", 71], ["3x", 66], ["10x", 64], ["base", 78]]} />
          <Caption $w={161} $pl={14}>zoom out</Caption>
          <Buttons items={[["1.5x", 70], ["3x", 66], ["10x", 64], ["100x", 75]]} />
        </ControlRow>
        <ControlRow $left={660} $h={60} $mt={18}>
          <PushButton $w={156}>multi-region</PushButton>
          <PositionBox>chr1:36,590,295-36,591,794</PositionBox>
          <Caption $w={147}>1,500 bp.</Caption>
          <SearchBox>chr1:36,590,295-36,591,794</SearchBox>
          <PushButton $w={55}>go</PushButton>
        </ControlRow>
        <Ideogram />
        <Tracks />
        <HelpRow>
          <EdgeMover $pl={24} $w={302}>
            move start
            <EdgeControls $shift={6}>
              <PushButton $w={54}>&lt;</PushButton>
              <EdgeInput>2.0</EdgeInput>
              <PushButton $w={55}>&gt;</PushButton>
            </EdgeControls>
          </EdgeMover>
          <HelpText>
            Click on a feature for details. Click+shift+drag to zoom in. Click side bars for track options. Drag side bars or labels up or down to reorder tracks. Drag tracks left
            <br />
            or right to new position. Press "?" for keyboard shortcuts.
          </HelpText>
          <EdgeMover $pl={73} $w={238}>
            move end
            <EdgeControls $shift={-59}>
              <PushButton $w={54}>&lt;</PushButton>
              <EdgeInput>2.0</EdgeInput>
              <PushButton $w={55}>&gt;</PushButton>
            </EdgeControls>
          </EdgeMover>
        </HelpRow>
        <ControlRow $left={632} $h={33} $mt={3}>
          <Buttons
            gap={21}
            items={[
              ["track search", 158], ["default tracks", 172], ["default order", 164], ["hide all", 102], ["manage custom tracks", 266],
              ["track hubs", 138], ["configure", 129], ["reverse", 106], ["resize", 90], ["refresh", 102],
            ]}
          />
        </ControlRow>
        <ControlRow $left={510} $h={72} $mt={10}>
          <PushButton $w={144}>collapse all</PushButton>
          <CenteredText>
            Use drop-down controls below and press refresh to alter tracks displayed.
            <br />
            Tracks with lots of items will automatically be displayed in more compact modes.
          </CenteredText>
          <PushButton $w={134}>expand all</PushButton>
        </ControlRow>
        <GroupHeader>
          <ToggleBox />
          <GroupTitle>Custom Tracks</GroupTitle>
          <PushButton $w={102}>refresh</PushButton>
        </GroupHeader>
      </Page>
    </Window>
  );
}
